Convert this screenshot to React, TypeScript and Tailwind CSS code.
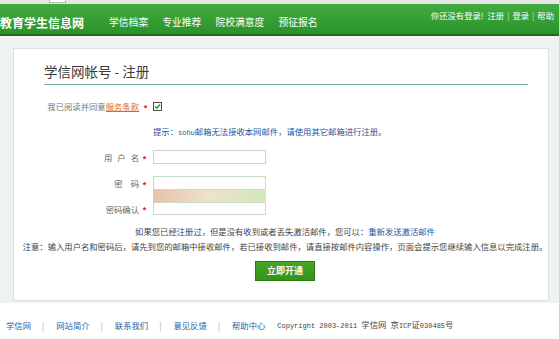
import React from "react";

const Star = () => (
  <span className="text-[#d31f1f] text-[9px] leading-[9px] font-bold font-['Liberation_Sans',sans-serif] translate-y-[2px] inline-block">
    *
  </span>
);

const Mono = ({ children }: { children: React.ReactNode }) => (
  <span className="font-['Liberation_Mono',monospace] text-[7px]">{children}</span>
);

function FieldRow({
  label,
  children,
  className = "",
}: {
  label: React.ReactNode;
  children: React.ReactNode;
  className?: string;
}) {
  return (
    <div className={"flex items-center " + className}>
      <div className="w-[125px] text-right text-[8.33px] leading-[12px] text-[#666]">{label}</div>
      <div className="w-[11px] flex justify-center">
        <Star />
      </div>
      <div className="ml-[3px]">{children}</div>
    </div>
  );
}

const Input = ({ h = "h-[14px]" }: { h?: string }) => (
  <div className={"w-[113px] bg-white border border-[#c6dac6] " + h} />
);

export default function App() {
  return (
    <div className="w-[559px] h-[339px] overflow-hidden bg-white font-['Noto_Sans_CJK_SC','Noto_Sans',sans-serif]">
      {/* browser strip */}
      <div className="h-[4px] bg-[#e6e6e6] flex">
        <div className="ml-[49px] w-[17px] h-[3px] bg-white border border-t-0 border-[#b8b8b8]" />
      </div>

      {/* header */}
      <header className="h-[32px] bg-gradient-to-b from-[#40ac40] to-[#2b922b] border-b-[2px] border-[#1e6d1e] flex items-start">
        <div className="text-white font-bold text-[12px] leading-[14px] mt-[12px] whitespace-nowrap">
          教育学生信息网
        </div>
        <nav className="flex gap-[14px] ml-[25px] mt-[12px] text-[9.8px] leading-[12px] text-white whitespace-nowrap">
          <span>学信档案</span>
          <span>专业推荐</span>
          <span>院校满意度</span>
          <span>预征报名</span>
        </nav>
        <div className="ml-auto mr-[5px] mt-[6px] text-[8.33px] leading-[10px] text-white whitespace-nowrap flex items-center">
          <span>你还没有登录!</span>
          <span className="ml-[4px]">注册</span>
          <span className="mx-[3px] text-[#bfe3bf]">|</span>
          <span>登录</span>
          <span className="mx-[3px] text-[#bfe3bf]">|</span>
          <span>帮助</span>
        </div>
      </header>

      {/* main */}
      <div className="bg-[#eff2f2] pl-[13px] pr-[10px] pt-[12px] pb-[2px]">
        <div className="bg-white border border-[#dae2e2] h-[253px] flex flex-col">
          <div className="ml-[30px] w-[484px] mt-[15px] pb-[6px] border-b border-[#74b295]">
            <h1 className="text-[13.5px] leading-[14px] text-[#3a3a3a] whitespace-nowrap">学信网帐号 - 注册</h1>
          </div>

          {/* agree */}
          <div className="flex items-center mt-[15px] h-[12px]">
            <div className="w-[125px] text-right text-[8.33px] leading-[12px] text-[#777] whitespace-nowrap">
              我已阅读并同意<span className="text-[#e0661a] underline">服务条款</span>
            </div>
            <div className="w-[13px] flex justify-center">
              <Star />
            </div>
            <div className="ml-[1px] w-[9px] h-[9px] border border-[#4a4a4a] bg-white flex items-center justify-center">
              <svg width="7" height="7" viewBox="0 0 7 7">
                <path d="M1 3.5 L2.8 5.3 L6 1.5" fill="none" stroke="#2e9a2e" strokeWidth="1.4" />
              </svg>
            </div>
          </div>

          {/* hint */}
          <div className="mt-[13px] ml-[139px] text-[8.33px] leading-[12px] text-[#1f55a0] whitespace-nowrap">
            提示：<Mono>sohu</Mono>邮箱无法接收本网邮件，请使用其它邮箱进行注册。
          </div>

          <FieldRow
            className="mt-[11px]"
            label={
              <span className="inline-flex gap-[5px]">
                <span>用</span>
                <span>户</span>
                <span>名</span>
              </span>
            }
          >
            <Input />
          </FieldRow>

          <FieldRow
            className="mt-[12px]"
            label={
              <span className="inline-flex gap-[8px]">
                <span>密</span>
                <span>码</span>
              </span>
            }
          >
            <Input />
          </FieldRow>
          <div className="ml-[139px] w-[113px] h-[12px] bg-gradient-to-r from-[#e8c1ac] via-[#efe2c8] to-[#cfe8bd]" />
          <FieldRow label="密码确认">
            <Input h="h-[13px]" />
          </FieldRow>

          {/* bottom center block */}
          <div className="pl-[8px] flex flex-col items-center">
            <div className="mt-[10px] text-[8.33px] leading-[12px] text-[#444] whitespace-nowrap">
              如果您已经注册过，但是没有收到或者丢失激活邮件，您可以：
              <span className="text-[#1f55a0]">重新发送激活邮件</span>
            </div>
            <div className="mt-[3px] text-[8.33px] leading-[12px] text-[#444] whitespace-nowrap">
              注意：输入用户名和密码后，请先到您的邮箱中接收邮件，若已接收到邮件，请直接按邮件内容操作，页面会提示您继续输入信息以完成注册。
            </div>
            <button className="mt-[9px] w-[60px] h-[20px] bg-gradient-to-b from-[#46a625] to-[#35931a] border border-[#2c7d13] text-white text-[9px] leading-[18px] font-bold">
              立即开通
            </button>
          </div>
        </div>
      </div>

      {/* footer */}
      <footer className="h-[36px] pt-[8px] bg-white flex items-center pl-[6px] text-[8.33px] leading-[12px] whitespace-nowrap">
        <span className="text-[#2b5fa5]">学信网</span>
        <span className="ml-[11px] mr-[12px] text-[#aaa]">|</span>
        <span className="text-[#2b5fa5]">网站简介</span>
        <span className="ml-[11px] mr-[12px] text-[#aaa]">|</span>
        <span className="text-[#2b5fa5]">联系我们</span>
        <span className="ml-[11px] mr-[12px] text-[#aaa]">|</span>
        <span className="text-[#2b5fa5]">意见反馈</span>
        <span className="ml-[11px] mr-[12px] text-[#aaa]">|</span>
        <span className="text-[#2b5fa5]">帮助中心</span>
        <span className="ml-[12px] text-[#444]">
          <Mono>Copyright 2003-2011 </Mono>学信网<Mono> </Mono>京<Mono>ICP</Mono>证<Mono>030485</Mono>号
        </span>
      </footer>
    </div>
  );
}
